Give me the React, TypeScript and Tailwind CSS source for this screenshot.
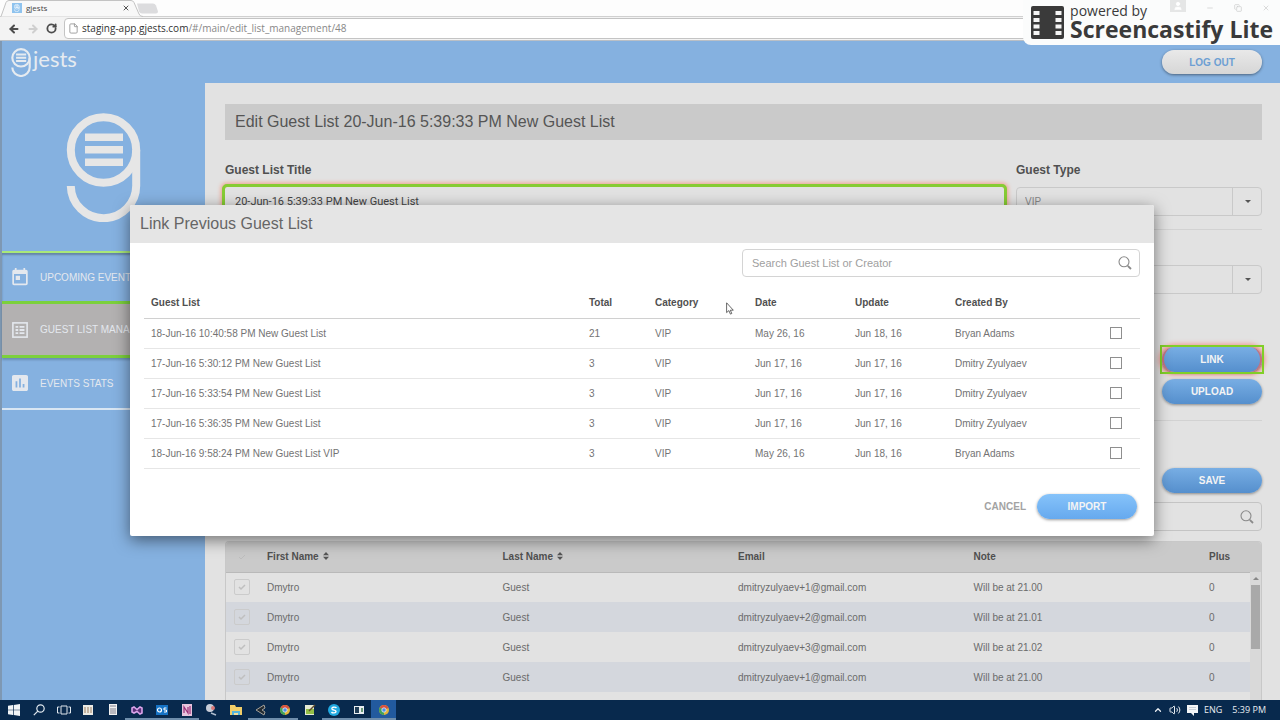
import type { ReactNode } from "react";
import { ArrowLeft, ArrowRight, RotateCw, File, X, Minus, Copy, User, ChevronUp, Volume2 } from "lucide-react";

const previousLists = [
  { name: "18-Jun-16 10:40:58 PM New Guest List", total: 21, date: "May 26, 16", update: "Jun 18, 16", by: "Bryan Adams" },
  { name: "17-Jun-16 5:30:12 PM New Guest List", total: 3, date: "Jun 17, 16", update: "Jun 17, 16", by: "Dmitry Zyulyaev" },
  { name: "17-Jun-16 5:33:54 PM New Guest List", total: 3, date: "Jun 17, 16", update: "Jun 17, 16", by: "Dmitry Zyulyaev" },
  { name: "17-Jun-16 5:36:35 PM New Guest List", total: 3, date: "Jun 17, 16", update: "Jun 17, 16", by: "Dmitry Zyulyaev" },
  { name: "18-Jun-16 9:58:24 PM New Guest List VIP", total: 3, date: "May 26, 16", update: "Jun 18, 16", by: "Bryan Adams" },
];

const guests = [
  { first: "Dmytro", last: "Guest", email: "dmitryzulyaev+1@gmail.com", note: "Will be at 21.00", plus: 0 },
  { first: "Dmytro", last: "Guest", email: "dmitryzulyaev+2@gmail.com", note: "Will be at 21.01", plus: 0 },
  { first: "Dmytro", last: "Guest", email: "dmitryzulyaev+3@gmail.com", note: "Will be at 21.02", plus: 0 },
  { first: "Dmytro", last: "Guest", email: "dmitryzulyaev+1@gmail.com", note: "Will be at 21.00", plus: 0 },
];

function GLogo({ className }: { className: string }) {
  return (
    <svg viewBox="66 113 75 109" className={className} fill="none" aria-hidden="true">
      <circle cx="103.5" cy="150" r="32.7" stroke="currentColor" strokeWidth="8" />
      <path d="M136.2 150V185A32.7 32.7 0 0 1 70.8 186" stroke="currentColor" strokeWidth="8" />
      <path d="M85 133.5h38v7.5H85zM85 146h38v7.5H85zM85 158.500h38v7.500H85z" fill="currentColor" />
    </svg>
  );
}

function SearchIcon() {
  return (
    <svg viewBox="0 0 14 14" className="size-3.5" fill="none" stroke="#8a8a8a" aria-hidden="true">
      <circle cx="6" cy="5.800" r="5" strokeWidth="1.100" />
      <path d="M9.800 9.800L13 13" strokeWidth="1.800" />
    </svg>
  );
}

function SortIcon() {
  return (
    <svg viewBox="0 0 6 8" className="ml-1 inline-block h-2 w-1.5 align-baseline" fill="#555" aria-hidden="true">
      <path d="M3 0L6 3.200H0zM3 8L0 4.800h6z" />
    </svg>
  );
}

function PillButton({ children, dim = true }: { children: ReactNode; dim?: boolean }) {
  const color = dim ? "from-[#78aee4] to-[#558fcd]" : "from-[#86c3fa] to-[#66a9ee]";
  return (
    <button type="button" className={`h-[25px] w-[100px] rounded-full bg-linear-to-b text-[10px] font-bold text-[#f4f4f4] shadow-[0_1px_3px_rgba(0,0,0,0.4)] ${color}`}>
      {children}
    </button>
  );
}

function Dropdown({ id, label, options }: { id: string; label: string; options: string[] }) {
  return (
    <div className="relative">
      <select id={id} aria-label={label} className="block h-[29px] w-full appearance-none rounded-sm border border-[#c9c9c9] bg-transparent px-2 text-[10px] font-normal text-[#888]">
        {options.map((o) => (
          <option key={o}>{o}</option>
        ))}
      </select>
      <span className="pointer-events-none absolute inset-y-0 right-0 flex w-[30px] items-center justify-center border-l border-[#c9c9c9]">
        <svg viewBox="0 0 6 3" className="h-[3px] w-1.5" fill="#555">
          <path d="M0 0h6L3 3z" />
        </svg>
      </span>
    </div>
  );
}

function BrowserChrome() {
  return (
    <div className="relative h-[41px] shrink-0 border-b border-[#b9bfc6] bg-[#fdfdfd] font-['Open_Sans','Noto_Sans',sans-serif]">
      <div className="flex h-4">
        <div className="relative flex w-[140px] items-center gap-1 pr-2.5 pl-3">
          <svg viewBox="0 0 160 17" className="absolute top-0 left-0 h-[17px] w-40" aria-hidden="true">
            <path d="M137 3.500h16q2 0 3 2l2 6q0 2-2 2h-14q-2 0-3-2z" fill="#dcdcde" />
            <path d="M1 16.500L6 2.500Q7 .5 9 .5H131Q133 .5 134 2.500L139 14q1 2.500 4 2.500" fill="#f8f8f8" stroke="#c3c3c3" />
          </svg>
          <span className="relative flex size-2.5 items-center justify-center bg-[#8fc3ee] text-white">
            <GLogo className="h-2" />
          </span>
          <span className="relative flex-1 text-[8px] text-[#444]">gjests</span>
          <button type="button" aria-label="Close tab" className="relative">
            <X className="size-2" strokeWidth={3} color="#555" />
          </button>
        </div>
      </div>
      <div className="flex h-6 items-center gap-[7px] border-t border-[#d0d0d0] bg-[#f3f3f3] pl-2">
        <button type="button" aria-label="Back"><ArrowLeft className="size-3" strokeWidth={4} color="#4c4c4c" /></button>
        <button type="button" aria-label="Forward"><ArrowRight className="size-3" strokeWidth={4} color="#cfcfcf" /></button>
        <button type="button" aria-label="Reload"><RotateCw className="size-[11px]" strokeWidth={4} color="#4c4c4c" /></button>
        <div className="flex h-[21px] flex-1 items-center gap-[3px] rounded-sm border border-[#c4c4c4] bg-white pl-[3px]">
          <File className="size-[11px]" strokeWidth={2} color="#999" />
          <span className="text-[10px] text-[#888]">
            <span className="text-[#333]">staging-app.gjests.com</span>/#/main/edit_list_management/48
          </span>
        </div>
      </div>
    </div>
  );
}

function Watermark() {
  return (
    <div className="absolute top-0 right-0 z-30 flex h-[45px] gap-1.5 rounded-bl-lg bg-[#fbfcfc] pt-1.5 pr-[7px] pl-2 font-['Open_Sans',sans-serif] text-[#3a3a3a]">
      <svg viewBox="0 0 33 33" className="size-[33px]" aria-hidden="true">
        <rect width="33" height="33" rx="2" fill="#3a3a3a" />
        <path d="M2.500 5h6v4h-6zM2.500 12h6v4h-6zM2.500 18.500h6v4h-6zM2.500 25h6v4h-6zM24.500 5h6v4h-6zM24.500 12h6v4h-6zM24.500 18.500h6v4h-6zM24.500 25h6v4h-6z" fill="#f5f5f5" />
      </svg>
      <div className="-mt-1">
        <p className="text-[14px] leading-[18px]">powered by</p>
        <p className="text-[23px] leading-[18px] font-bold">Screencastify Lite</p>
      </div>
      <div className="absolute top-0 right-0 flex w-[110px] items-center justify-between pr-2.5 text-[#c9c9c9]">
        <span className="flex h-3 w-4 items-center justify-center bg-[#e5e6e6] text-white"><User className="size-2.5" fill="currentColor" /></span>
        <Minus className="mt-1 size-2" />
        <Copy className="mt-1 size-2" />
        <X className="mt-1 size-2" />
      </div>
    </div>
  );
}

function Sidebar() {
  return (
    <nav className="w-[203px] shrink-0 bg-[#85b1e0] text-[10px] text-[#e4e8ee]">
      <div className="flex h-[168px] justify-center pt-[30px] text-[#e6e6e6]">
        <GLogo className="h-[109px] w-[75px]" />
      </div>
      <a href="#events" className="flex h-[50px] items-center gap-3 border-t-2 border-[#a9e878] pl-2.5 shadow-[inset_0_2px_2px_rgba(0,0,0,0.25)]">
        <svg viewBox="3 1 18 21" className="h-[18px] w-4" fill="currentColor" aria-hidden="true">
          <path d="M19 3h-1V1h-2v2H8V1H6v2H5c-1.100 0-2 .9-2 2v14c0 1.100.9 2 2 2h14c1.100 0 2-.9 2-2V5c0-1.100-.9-2-2-2zm0 16H5V8h14v11zM7 10h5v5H7z" />
        </svg>
        UPCOMING EVENTS
      </a>
      <a href="#guests" className="flex h-[57px] items-center gap-3 border-y-3 border-[#7cd03c] bg-[#b3b1b1] pl-2.5 shadow-[0_2px_2px_rgba(0,0,0,0.2)]">
        <svg viewBox="0 0 18 18" className="size-4" fill="none" stroke="currentColor" aria-hidden="true">
          <rect x="1" y="1" width="16" height="16" strokeWidth="1.800" />
          <path d="M4 5.500h3M4 9h3M4 12.500h3M8.500 5.500H14M8.500 9H14M8.500 12.500H14" strokeWidth="2" />
        </svg>
        GUEST LIST MANAGEMENT
      </a>
      <a href="#stats" className="flex h-[52px] items-center gap-3 border-b-2 border-[#d9e6f3] pl-2.5">
        <svg viewBox="3 3 18 18" className="size-4" fill="currentColor" aria-hidden="true">
          <path d="M19 3H5c-1.100 0-2 .9-2 2v14c0 1.100.9 2 2 2h14c1.100 0 2-.9 2-2V5c0-1.100-.9-2-2-2zM9 17H7v-7h2v7zm4 0h-2V7h2v10zm4 0h-2v-4h2v4z" />
        </svg>
        EVENTS STATS
      </a>
    </nav>
  );
}

function GuestTable() {
  return (
    <div className="relative mt-2.5 flex-1 overflow-hidden rounded-t-sm border border-b-0 border-[#c8c8c8]">
      <table className="w-full table-fixed text-left text-[10px] text-[#6b6b6b]">
        <thead>
          <tr className="h-[30px] border-b border-[#b9b9b9] bg-[#cacaca] text-[#505050]">
            <th className="w-[41px] pl-3">
              <svg viewBox="0 0 8 8" className="size-2" fill="none" stroke="#bdbdbd"><path d="M1 4l2 2 4-4" /></svg>
            </th>
            <th>First Name<SortIcon /></th>
            <th>Last Name<SortIcon /></th>
            <th>Email</th>
            <th>Note</th>
            <th className="w-[52px]">Plus</th>
          </tr>
        </thead>
        <tbody>
          {guests.map((g, i) => (
            <tr key={i} className="h-[30px] even:bg-[#d4d7dd]">
              <td className="pl-2">
                <span className="relative block size-4">
                  <input type="checkbox" aria-label={`Select guest ${i + 1}`} className="block size-4 appearance-none rounded-xs border border-[#cbcbcb]" />
                  <svg viewBox="0 0 8 8" className="pointer-events-none absolute top-1 left-1 size-2" fill="none" stroke="#bfbfbf" strokeWidth="1.500"><path d="M1 4l2 2 4-4" /></svg>
                </span>
              </td>
              <td>{g.first}</td>
              <td>{g.last}</td>
              <td>{g.email}</td>
              <td>{g.note}</td>
              <td>{g.plus}</td>
            </tr>
          ))}
        </tbody>
      </table>
      <div className="absolute top-[30px] right-0 bottom-0 flex w-[11px] flex-col items-center bg-[#d9d9d9]">
        <svg viewBox="0 0 6 3" className="my-[5px] h-[3px] w-1.5" fill="#888"><path d="M0 3h6L3 0z" /></svg>
        <div className="h-16 w-[9px] bg-[#a9a9a9]" />
      </div>
    </div>
  );
}

function EditForm() {
  return (
    <main className="flex min-w-0 flex-1 flex-col bg-[#e2e2e2] pt-[21px] pr-[18px] pl-5">
      <h1 className="bg-[#cacaca] px-2.5 text-[16px] leading-9 text-[#555]">Edit Guest List 20-Jun-16 5:39:33 PM New Guest List</h1>
      <div className="mt-5 grid grid-cols-[1fr_246px] gap-x-3 border-b border-[#d2d2d2] pb-[13px] text-[12px] font-bold text-[#505050]">
        <label htmlFor="title" className="mb-[7px] leading-5">Guest List Title</label>
        <label htmlFor="type" className="mb-[7px] leading-5">Guest Type</label>
        <input id="title" defaultValue="20-Jun-16 5:39:33 PM New Guest List" className="h-7 rounded-xs px-2.5 font-['Roboto',sans-serif] text-[11px] font-normal text-[#444] shadow-[0_0_4px_4px_#f0a08c] outline-3 outline-[#86cc34]" />
        <Dropdown id="type" label="Guest Type" options={["VIP"]} />
      </div>
      <div className="mt-[35px] ml-auto w-[246px]">
        <Dropdown id="group" label="Group" options={[""]} />
      </div>
      <div className="mt-[53px] flex flex-col items-end gap-[7px] border-b border-[#d2d2d2] pb-4">
        <div className="relative flex rounded-full shadow-[0_0_5px_3px_#f0968f]">
          <PillButton>LINK</PillButton>
          <span className="pointer-events-none absolute -inset-0.5 border-2 border-[#80cf28]" />
          <span className="pointer-events-none absolute inset-0 rounded-full border-x-2 border-[#c8707c]" />
        </div>
        <PillButton>UPLOAD</PillButton>
      </div>
      <div className="mt-[47px] flex flex-col items-end gap-[9px]">
        <PillButton>SAVE</PillButton>
        <label className="flex h-[29px] w-full items-center rounded-sm border border-[#c4c4c4] pr-[7px]">
          <input type="search" aria-label="Search guests" className="min-w-0 flex-1 px-2 text-[10px]" />
          <SearchIcon />
        </label>
      </div>
      <GuestTable />
    </main>
  );
}

function LinkDialog() {
  return (
    <div role="dialog" aria-labelledby="dialog-title" className="w-[1024px] max-w-full overflow-hidden rounded-xs bg-white shadow-[0_4px_16px_rgba(0,0,0,0.5)]">
      <h2 id="dialog-title" className="bg-[#e5e5e5] px-2.5 text-[16px] leading-[38px] text-[#666]">Link Previous Guest List</h2>
      <div className="px-3.5 pt-1.5 pb-[17px]">
        <label className="ml-auto flex h-7 w-[398px] items-center rounded-sm border border-[#d4d4d4] pr-[7px] pl-[9px]">
          <input type="search" placeholder="Search Guest List or Creator" className="min-w-0 flex-1 text-[11px] placeholder:text-[#a0a0a0]" />
          <SearchIcon />
        </label>
        <table className="mt-[10px] w-full table-fixed text-left text-[10px] text-[#737373]">
          <thead>
            <tr className="h-[31px] border-b border-[#d0d0d0] text-[#505050]">
              <th className="pl-[7px]">Guest List</th>
              <th className="w-[66px]">Total</th>
              <th className="w-[100px]">Category</th>
              <th className="w-[100px]">Date</th>
              <th className="w-[100px]">Update</th>
              <th className="w-[155px]">Created By</th>
              <th className="w-[30px]" />
            </tr>
          </thead>
          <tbody>
            {previousLists.map((l) => (
              <tr key={l.name} className="h-[30px] border-b border-[#e6e6e6]">
                <td className="pl-[7px]">{l.name}</td>
                <td>{l.total}</td>
                <td>VIP</td>
                <td>{l.date}</td>
                <td>{l.update}</td>
                <td>{l.by}</td>
                <td>
                  <input type="checkbox" aria-label={`Select ${l.name}`} className="block size-3 appearance-none border border-[#8f8f8f]" />
                </td>
              </tr>
            ))}
          </tbody>
        </table>
        <div className="mt-[25px] flex items-center justify-end gap-[11px] pr-[3px]">
          <button type="button" className="text-[10px] font-bold text-[#a3a3a3]">CANCEL</button>
          <PillButton dim={false}>IMPORT</PillButton>
        </div>
      </div>
    </div>
  );
}

const chromeIcon = (
  <>
    <circle cx="6" cy="6" r="5" fill="#e2b53a" />
    <path d="M6 6L1.700 3.500A5 5 0 0 1 10.600 4z" fill="#d9503f" />
    <path d="M6 6L1.700 3.500A5 5 0 0 0 6 11z" fill="#3fa35b" />
    <circle cx="6" cy="6" r="2.200" fill="#4d8fe8" stroke="#eee" strokeWidth=".8" />
  </>
);

const taskIcons: { name: string; open?: boolean; active?: boolean; art: ReactNode }[] = [
  { name: "Start", art: <path d="M0 1.800L5 1v4.700H0zM5.700.9L12 0v5.700H5.700zM0 6.300h5V11l-5-.8zM5.700 6.300H12V12l-6.300-.9z" fill="#f2f5f8" /> },
  { name: "Search", art: <g fill="none" stroke="#dfe7ee" strokeWidth="1.200"><circle cx="7.500" cy="4.500" r="3.700" /><path d="M4.800 7.200L.8 11.200" /></g> },
  { name: "Task View", art: <path d="M3 2h6v8H3zM1.500 3H-.5v6h2M10.500 3h2v6h-2" fill="none" stroke="#dfe7ee" /> },
  { name: "Columns", art: <><path d="M1 1h10v10H1z" fill="#eceae4" /><path d="M3 3v6M6 3v6M9 3v6" stroke="#9d7f60" /></> },
  { name: "Calculator", art: <><path d="M2 0h8v11H2z" fill="#f0f0f0" /><path d="M3 2h6M4 4v6M6 4v6M8 4v6" stroke="#667" strokeWidth=".8" /></> },
  { name: "Visual Studio", open: true, art: <path d="M1 4l2-1 3 2.500L9 3l2 1v5l-2 1-3-2.500L3 9 1 8z" fill="#5b2f78" stroke="#dba4ea" strokeWidth="1.600" /> },
  { name: "Outlook", open: true, art: <><path d="M0 1h12v10H0z" fill="#1673c5" /><circle cx="3.500" cy="6" r="2" fill="none" stroke="#fff" strokeWidth="1.200" /><path d="M10.500 4H8v2h2.500v2H8" fill="none" stroke="#fff" /></> },
  { name: "OneNote", open: true, art: <><path d="M1 0h10v12H1z" fill="#e7c4dd" /><path d="M3 9V3l4 6V3M9 2v8" fill="none" stroke="#9b2f78" strokeWidth="1.200" /></> },
  { name: "Snipping Tool", art: <><circle cx="5" cy="4" r="4" fill="#c8cdd8" /><circle cx="8" cy="4" r="2" fill="#d87878" /><path d="M6 9l5 2" stroke="#aebccd" strokeWidth="1.500" /></> },
  { name: "File Explorer", art: <><path d="M0 1h5l1 2h6v8H0z" fill="#f0cd68" /><path d="M2 7h8v4H2z" fill="#55b5dc" /><path d="M4 9h4v2H4z" fill="#f4df9c" /></> },
  { name: "Unity", open: true, art: <path d="M1 6l8-5 1 3-3 2 3 2-1 3z" fill="#232b32" stroke="#a5a29b" /> },
  { name: "Chrome", open: true, art: chromeIcon },
  { name: "Notepad++", art: <><path d="M1 1h9v10H1z" fill="#e5ead5" /><path d="M2 5h8v5H2z" fill="#93be47" /><path d="M5 7l6-6" stroke="#614b2c" strokeWidth="1.500" /></> },
  { name: "Skype", open: true, art: <><circle cx="6" cy="6" r="6" fill="#20a9e1" /><path d="M8.500 4C7 2.500 3.500 3 4 5c.5 1.400 4 1 4 2.500S4.500 9.500 3.500 8" fill="none" stroke="#fff" strokeWidth="1.400" /></> },
  { name: "Remote Desktop", open: true, art: <><path d="M1 2h10v8H1z" fill="#e9eef1" /><path d="M2 3h4v6H2z" fill="#223f58" /><path d="M8 4h2v4H8z" fill="#6a9a76" /></> },
  { name: "Chrome window", active: true, open: true, art: chromeIcon },
];

function Taskbar() {
  return (
    <footer className="relative z-20 flex h-5 shrink-0 items-center justify-between bg-[#08294d] font-['Open_Sans',sans-serif] text-[9px] text-[#e8edf2]">
      <div className="flex h-full w-[396px] pl-0.5">
        {taskIcons.map((t) => (
          <button key={t.name} type="button" aria-label={t.name} className={`flex flex-1 items-center justify-center border-b-2 ${t.active ? "bg-[#225a9e]" : ""} ${t.open ? "border-[#6f8eac]" : "border-transparent"}`}>
            <svg viewBox="0 0 12 12" className="mt-0.5 size-3 overflow-visible">{t.art}</svg>
          </button>
        ))}
      </div>
      <div className="flex items-center gap-1.5 pr-3.5">
        <ChevronUp className="size-2.5" strokeWidth={3} />
        <Volume2 className="size-3" />
        <svg viewBox="0 0 11 11" className="size-[11px]" aria-hidden="true">
          <path d="M0 0h11v8H7v3L4 8H0z" fill="#f4f6f8" />
          <path d="M2 2.500h7M2 4.500h7" stroke="#b5c0cb" strokeWidth=".7" />
        </svg>
        <span>ENG</span>
        <span className="ml-1">5:39 PM</span>
      </div>
    </footer>
  );
}

export default function App() {
  return (
    <div className="relative flex h-screen flex-col overflow-hidden bg-[#e2e2e2] font-['Liberation_Sans',Arial,sans-serif]">
      <BrowserChrome />
      <Watermark />
      <div className="relative flex min-h-0 flex-1 flex-col border-l-2 border-[#7e98b3]">
        <header className="flex h-[42px] shrink-0 items-center justify-between bg-[#85b1e0] pr-[18px] pl-[9px] text-[#e6ebf0]">
          <div className="flex items-center font-['Lato',sans-serif] text-[22px]">
            <GLogo className="h-[29px] w-5" />
            <span className="-mt-2 ml-0.5">jests</span>
            <span className="-mt-5 text-[4px]">™</span>
          </div>
          <button type="button" className="h-6 w-[100px] rounded-full bg-linear-to-b from-[#e9e9e9] to-[#d6d6d6] text-[10px] font-bold text-[#6d9fd3] shadow-[0_1px_3px_rgba(0,0,0,0.45)]">LOG OUT</button>
        </header>
        <div className="flex min-h-0 flex-1">
          <Sidebar />
          <EditForm />
        </div>
        <div className="absolute inset-0 flex items-start justify-center pt-[164px] pl-0.5">
          <LinkDialog />
        </div>
      </div>
      <svg viewBox="0 0 8 13" className="pointer-events-none absolute top-[302px] left-[726px] z-30 h-[13px] w-2" aria-hidden="true">
        <path d="M.6.8v9.800l2.300-2 1.500 3.500 1.400-.6-1.500-3.300h3z" fill="#fff" stroke="#444" strokeWidth=".8" />
      </svg>
      <Taskbar />
    </div>
  );
}
